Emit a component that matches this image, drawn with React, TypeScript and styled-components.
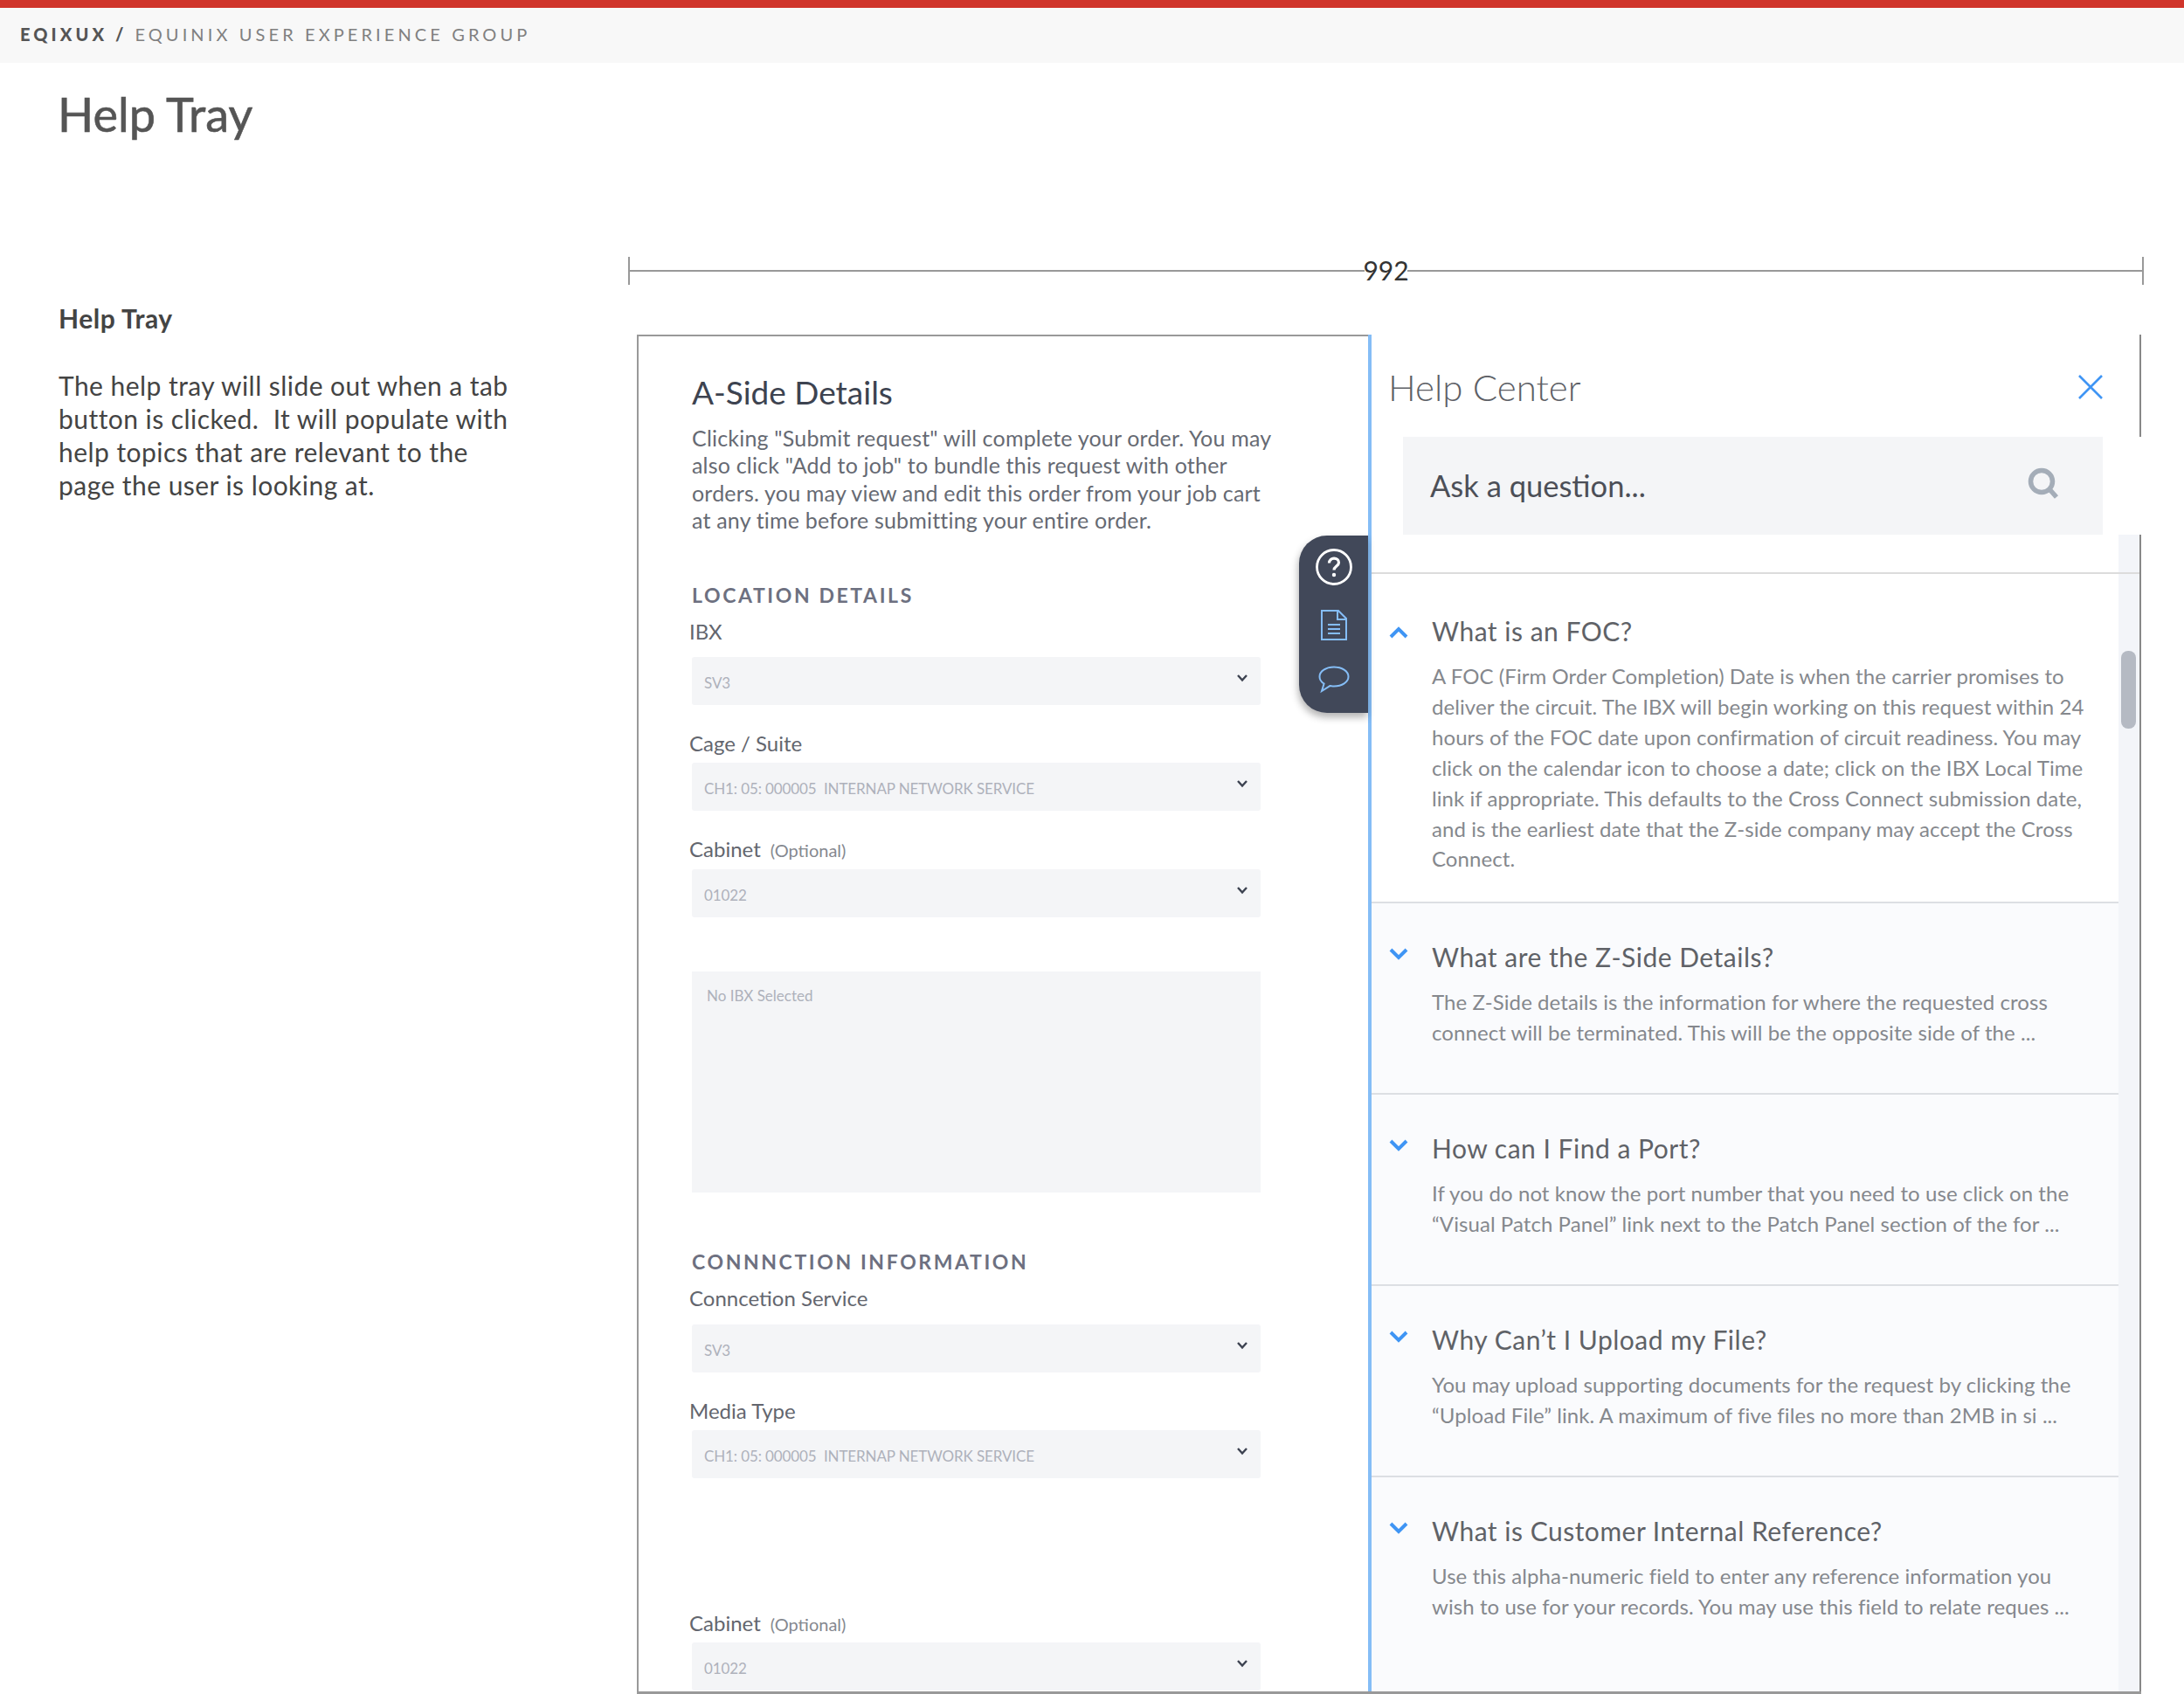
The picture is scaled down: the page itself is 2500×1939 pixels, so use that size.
import { FC } from "react";
import styled, { createGlobalStyle } from "styled-components";

const FONT = `Lato, "Liberation Sans", sans-serif`;

const GlobalStyle = createGlobalStyle`
  html, body {
    margin: 0;
    padding: 0;
    background: #fff;
    font-family: ${FONT};
  }
`;

const Page = styled.div`
  width: 2500px;
  height: 1939px;
  overflow: hidden;
  display: flex;
  flex-direction: column;
  background: #fff;
`;

const TopBar = styled.header`
  height: 60px;
  flex: none;
  border-top: 9px solid #d0352b;
  background: #f8f8f8;
  display: flex;
  align-items: center;
  padding: 0 0 3px 23px;
  font-size: 20px;
  letter-spacing: 4.1px;
  color: #808080;
  white-space: pre;
`;

const Brand = styled.b`
  font-weight: 900;
  color: #555;
`;

const PageTitle = styled.h1`
  margin: 29px 0 0 66px;
  font-size: 54px;
  line-height: 60px;
  font-weight: 400;
  -webkit-text-stroke: 0.6px #555;
  color: #555;
`;

const Content = styled.div`
  flex: 1;
  display: flex;
  min-height: 0;
  margin-top: 133px;
`;

const Notes = styled.aside`
  width: 719px;
  flex: none;
  padding: 51px 0 0 67px;
  box-sizing: border-box;
  color: #444;
`;

const NotesTitle = styled.h2`
  margin: 0;
  font-size: 30px;
  line-height: 38px;
  font-weight: 700;
  letter-spacing: 0.5px;
`;

const NotesBody = styled.p`
  margin: 39px 0 0;
  width: 530px;
  font-size: 30px;
  line-height: 38px;
  letter-spacing: 0.45px;
`;

const Main = styled.main`
  flex: 1;
  display: flex;
  flex-direction: column;
  min-width: 0;
`;

const Ruler = styled.div`
  width: 1735px;
  height: 32px;
  flex: none;
  display: flex;
  align-items: center;
  border-left: 2px solid #999;
  border-right: 2px solid #999;
  box-sizing: border-box;
`;

const RulerLine = styled.span`
  flex: 1;
  height: 2px;
  background: #999;
`;

const RulerValue = styled.span`
  font-size: 30px;
  line-height: 32px;
  color: #333;
  margin: -3px -2px 0;
`;

const Frame = styled.div`
  flex: 1;
  min-height: 0;
  width: 1722px;
  margin: 57px 0 0 10px;
  display: flex;
  border-bottom: 3px solid #999;
`;

const FormPanel = styled.section`
  width: 837px;
  flex: none;
  box-sizing: border-box;
  border-left: 2px solid #999;
  border-top: 2px solid #999;
  padding: 42px 0 0 61px;
  overflow: hidden;
`;

const FormTitle = styled.h2`
  margin: 0;
  font-size: 37px;
  line-height: 44px;
  font-weight: 400;
  color: #3d4350;
`;

const Intro = styled.p`
  margin: 15px 0 0;
  width: 670px;
  font-size: 25px;
  line-height: 31.4px;
  letter-spacing: 0.19px;
  color: #666a73;
`;

const SectionTitle = styled.h3<{ $top: number }>`
  margin: ${({ $top }) => $top}px 0 0;
  font-size: 23px;
  line-height: 24px;
  font-weight: 700;
  letter-spacing: 2.6px;
  color: #6d7080;
`;

const Label = styled.label<{ $top: number }>`
  display: block;
  margin: ${({ $top }) => $top}px 0 0 -3px;
  font-size: 24px;
  line-height: 30px;
  color: #63666e;
`;

const Optional = styled.span`
  font-size: 20px;
  margin-left: 11px;
  color: #85888f;
`;

const Select = styled.div<{ $top: number }>`
  margin-top: ${({ $top }) => $top}px;
  width: 651px;
  height: 55px;
  box-sizing: border-box;
  background: #f4f5f7;
  border-radius: 3px;
  padding: 5px 14px 0 14px;
  display: flex;
  align-items: center;
  justify-content: space-between;
  font-size: 17px;
  letter-spacing: -0.12px;
  color: #aeb1bb;
`;

const SelectArrow = styled.svg`
  width: 14px;
  height: 10px;
  margin-top: -11px;
  fill: none;
  stroke: #3c4250;
  stroke-width: 2.4;
`;

const InfoBox = styled.div`
  margin-top: 62px;
  width: 651px;
  height: 253px;
  box-sizing: border-box;
  background: #f4f5f7;
  padding: 18px 17px;
  font-size: 17px;
  line-height: 20px;
  color: #aeb1bb;
`;

const Tray = styled.section`
  flex: 1;
  min-width: 0;
  position: relative;
  display: flex;
  flex-direction: column;
  border-left: 4px solid #85bdf6;
`;

const Dock = styled.nav`
  position: absolute;
  left: -83px;
  top: 230px;
  width: 79px;
  height: 203px;
  box-sizing: border-box;
  padding-top: 14px;
  background: #414859;
  border-radius: 32px 0 0 32px;
  box-shadow: -1px 5px 9px rgba(0, 0, 0, 0.3);
  display: flex;
  flex-direction: column;
  align-items: center;
`;

const DockIcon = styled.svg<{ $top: number }>`
  display: block;
  margin-top: ${({ $top }) => $top}px;
  fill: none;
  stroke: #85bdf6;
  stroke-width: 2;
`;

const TrayHead = styled.header`
  height: 117px;
  flex: none;
  box-sizing: border-box;
  padding: 2px 42px 0 19px;
  display: flex;
  align-items: center;
  justify-content: space-between;
  border-right: 2px solid #888;
`;

const TrayTitle = styled.h2`
  margin: 0;
  font-size: 42px;
  font-weight: 300;
  color: #5d6066;
`;

const CloseIcon = styled.svg`
  width: 28px;
  height: 28px;
  fill: none;
  stroke: #3f95f4;
  stroke-width: 2.6;
`;

const SearchRow = styled.div`
  height: 112px;
  flex: none;
  padding: 0 44px 0 36px;
  background: #fff;
`;

const SearchBox = styled.div`
  height: 100%;
  box-sizing: border-box;
  background: #f4f5f7;
  display: flex;
  align-items: center;
  justify-content: space-between;
  padding: 0 50px 1px 31px;
  font-size: 34.5px;
  color: #4c4f57;
`;

const SearchIcon = styled.svg`
  width: 36px;
  height: 36px;
  margin-top: -6px;
  fill: none;
  stroke: #a4adb8;
  stroke-width: 5.5;
`;

const TrayBody = styled.div`
  flex: 1;
  min-height: 0;
  display: flex;
  border-right: 2px solid #888;
`;

const FaqList = styled.div`
  flex: 1;
  min-width: 0;
  display: flex;
  flex-direction: column;
`;

const FaqSpacer = styled.div`
  height: 43px;
  flex: none;
  border-bottom: 2px solid #dcdcdc;
`;

const FaqItem = styled.article<{ $open?: boolean }>`
  flex: none;
  height: ${({ $open }) => ($open ? 377 : 219)}px;
  box-sizing: border-box;
  display: flex;
  padding: ${({ $open }) => ($open ? 47 : 43)}px 0 0 20px;
  background: ${({ $open }) => ($open ? "#fff" : "#fafbfd")};
  border-bottom: 2px solid #dcdfe3;

  &:last-child {
    flex: 1;
    border-bottom: 0;
  }
`;

const Chevron = styled.svg<{ $open?: boolean }>`
  flex: none;
  width: 22px;
  height: 14px;
  margin: ${({ $open }) => ($open ? 13 : 8)}px 27px 0 0;
  fill: none;
  stroke: #3f95f4;
  stroke-width: 4;
`;

const FaqText = styled.div`
  min-width: 0;
`;

const FaqTitle = styled.h3`
  margin: 0;
  font-size: 30px;
  line-height: 36px;
  font-weight: 400;
  letter-spacing: 0.5px;
  color: #5f6267;
`;

const FaqBody = styled.p`
  margin: 17px 0 0;
  font-size: 24px;
  line-height: 34.9px;
  letter-spacing: 0.07px;
  color: #85888d;
  white-space: pre-line;
`;

const ScrollTrack = styled.div`
  width: 24px;
  flex: none;
  position: relative;
  background: #f3f5f9;

  &::before {
    content: "";
    position: absolute;
    left: 0;
    right: 0;
    top: 43px;
    height: 2px;
    background: #dcdcdc;
  }
`;

const ScrollThumb = styled.div`
  position: absolute;
  left: 3px;
  top: 133px;
  width: 17px;
  height: 89px;
  border-radius: 8px;
  background: #b5bac3;
`;

const Arrow: FC = () => (
  <SelectArrow viewBox="0 0 14 10">
    <polyline points="2,2 7,7.5 12,2" />
  </SelectArrow>
);

const faqs = [
  {
    title: "What are the Z-Side Details?",
    body: "The Z-Side details is the information for where the requested cross\nconnect will be terminated.  This will be the opposite side of the ...",
  },
  {
    title: "How can I Find a Port?",
    body: "If you do not know the port number that you need to use click on the\n“Visual Patch Panel” link next to the Patch Panel section of the for ...",
  },
  {
    title: "Why Can’t I Upload my File?",
    body: "You may upload supporting documents for the request by clicking the\n“Upload File” link. A maximum of five files no more than 2MB in si ...",
  },
  {
    title: "What is Customer Internal Reference?",
    body: "Use this alpha-numeric field to enter any reference information you\nwish to use for your records. You may use this field to relate reques ...",
  },
];

const App: FC = () => (
  <Page>
    <GlobalStyle />
    <TopBar>
      <Brand>EQIXUX / </Brand>EQUINIX USER EXPERIENCE GROUP
    </TopBar>
    <PageTitle>Help Tray</PageTitle>
    <Content>
      <Notes>
        <NotesTitle>Help Tray</NotesTitle>
        <NotesBody>
          The help tray will slide out when a tab button is clicked.&nbsp; It
          will populate with help topics that are relevant to the page the user
          is looking at.
        </NotesBody>
      </Notes>
      <Main>
        <Ruler>
          <RulerLine />
          <RulerValue>992</RulerValue>
          <RulerLine />
        </Ruler>
        <Frame>
          <FormPanel>
            <FormTitle>A-Side Details</FormTitle>
            <Intro>
              Clicking "Submit request" will complete your order. You may also
              click "Add to job" to bundle this request with other orders. you
              may view and edit this order from your job cart at any time before
              submitting your entire order.
            </Intro>
            <SectionTitle $top={57}>LOCATION DETAILS</SectionTitle>
            <Label $top={15}>IBX</Label>
            <Select $top={14}>
              SV3
              <Arrow />
            </Select>
            <Label $top={29}>Cage / Suite</Label>
            <Select $top={7}>
              CH1: 05: 000005&nbsp; INTERNAP NETWORK SERVICE
              <Arrow />
            </Select>
            <Label $top={29}>
              Cabinet<Optional>(Optional)</Optional>
            </Label>
            <Select $top={7}>
              01022
              <Arrow />
            </Select>
            <InfoBox>No IBX Selected</InfoBox>
            <SectionTitle $top={67}>CONNNCTION INFORMATION</SectionTitle>
            <Label $top={15}>Conncetion Service</Label>
            <Select $top={15}>
              SV3
              <Arrow />
            </Select>
            <Label $top={29}>Media Type</Label>
            <Select $top={7}>
              CH1: 05: 000005&nbsp; INTERNAP NETWORK SERVICE
              <Arrow />
            </Select>
            <Label $top={151}>
              Cabinet<Optional>(Optional)</Optional>
            </Label>
            <Select $top={6}>
              01022
              <Arrow />
            </Select>
          </FormPanel>
          <Tray>
            <Dock>
              <DockIcon $top={0} width="44" height="44" viewBox="0 0 44 44">
                <circle cx="22" cy="22" r="19.5" stroke="#fff" strokeWidth="2.8" />
                <path
                  d="M16.5 17.5c0-3.2 2.4-5.3 5.6-5.3 3.1 0 5.4 1.9 5.4 4.7 0 4-5.500 4.2-5.500 8.6"
                  stroke="#fff"
                  strokeWidth="3.2"
                />
                <circle cx="22" cy="31" r="2.2" fill="#fff" stroke="none" />
              </DockIcon>
              <DockIcon $top={27} width="30" height="35" viewBox="0 0 30 35">
                <path d="M1 1h19l9 9v24H1z" />
                <path d="M19 1v10h10" />
                <path d="M8 17h14M8 22h14M8 27h14" />
              </DockIcon>
              <DockIcon $top={29} width="36" height="32" viewBox="0 0 36 32">
                <path d="M18 1.5c9 0 16.5 4.6 16.5 11s-7.5 11-16.500 11c-1.7 0-3.2-.15-4.7-.45L4 29l2.6-8.500C3.300 18.500 1.500 15.700 1.500 12.500c0-6.400 7.500-11 16.500-11z" />
              </DockIcon>
            </Dock>
            <TrayHead>
              <TrayTitle>Help Center</TrayTitle>
              <CloseIcon viewBox="0 0 28 28">
                <path d="M1 1l26 26M27 1L1 27" />
              </CloseIcon>
            </TrayHead>
            <SearchRow>
              <SearchBox>
                Ask a question...
                <SearchIcon viewBox="0 0 36 36">
                  <circle cx="16" cy="16" r="12.5" />
                  <path d="M25 25l8 9" />
                </SearchIcon>
              </SearchBox>
            </SearchRow>
            <TrayBody>
              <FaqList>
                <FaqSpacer />
                <FaqItem $open>
                  <Chevron $open viewBox="0 0 22 14">
                    <polyline points="2,12 11,3 20,12" />
                  </Chevron>
                  <FaqText>
                    <FaqTitle>What is an FOC?</FaqTitle>
                    <FaqBody>
                      {
                        "A FOC (Firm Order Completion) Date is when the carrier promises to\ndeliver the circuit. The IBX will begin working on this request within 24\nhours of the FOC date upon confirmation of circuit readiness. You may\nclick on the calendar icon to choose a date; click on the IBX Local Time\nlink if appropriate. This defaults to the Cross Connect submission date,\nand is the earliest date that the Z-side company may accept the Cross\nConnect."
                      }
                    </FaqBody>
                  </FaqText>
                </FaqItem>
                {faqs.map((faq) => (
                  <FaqItem key={faq.title}>
                    <Chevron viewBox="0 0 22 14">
                      <polyline points="2,2 11,11 20,2" />
                    </Chevron>
                    <FaqText>
                      <FaqTitle>{faq.title}</FaqTitle>
                      <FaqBody>{faq.body}</FaqBody>
                    </FaqText>
                  </FaqItem>
                ))}
              </FaqList>
              <ScrollTrack>
                <ScrollThumb />
              </ScrollTrack>
            </TrayBody>
          </Tray>
        </Frame>
      </Main>
    </Content>
  </Page>
);

export default App;
